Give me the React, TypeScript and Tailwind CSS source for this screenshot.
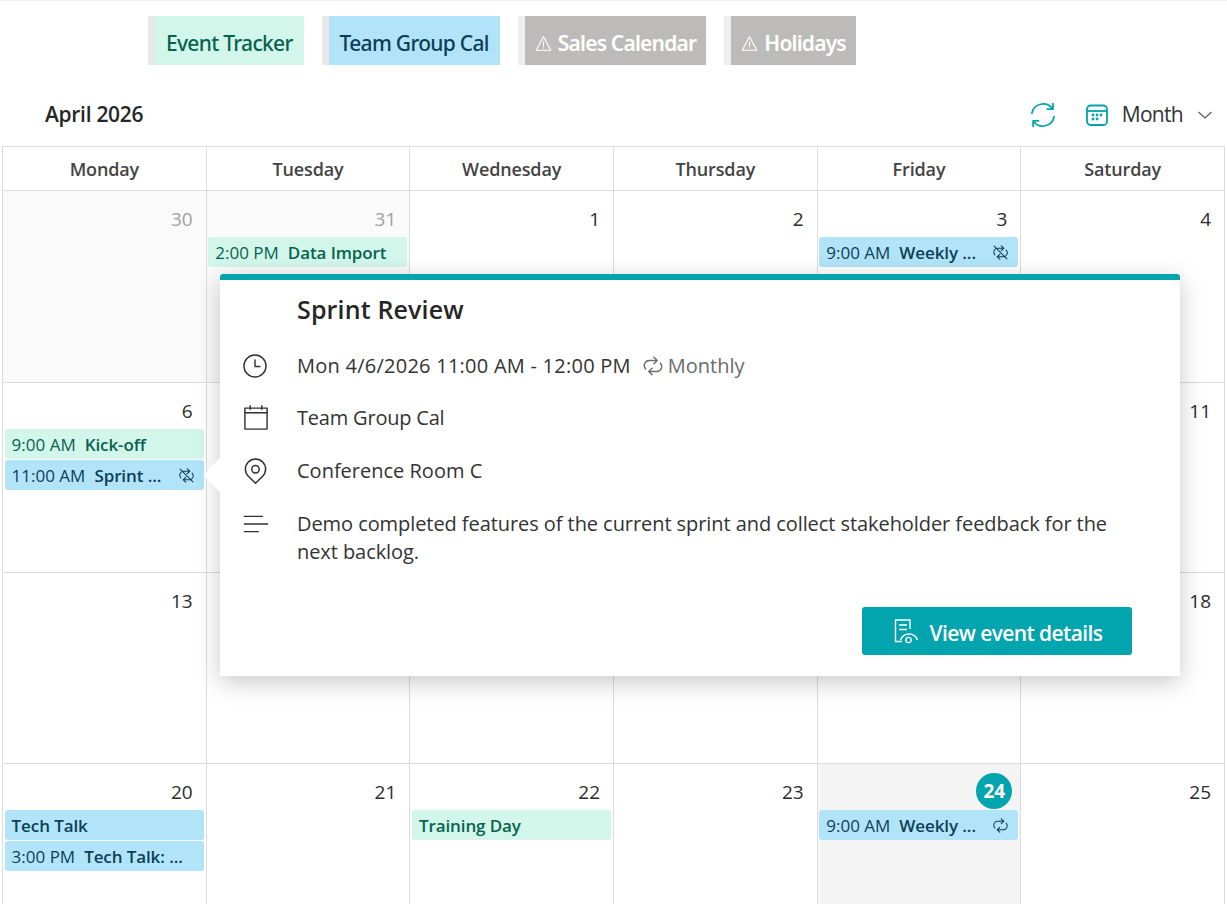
import type { ReactNode } from 'react'

type CalEvent = {
  time?: string
  title: string
  kind: 'green' | 'blue'
  icon?: 'off' | 'repeat'
}

type Day = {
  date: number
  muted?: boolean
  today?: boolean
  events?: CalEvent[]
}

const WEEKDAYS = ['Monday', 'Tuesday', 'Wednesday', 'Thursday', 'Friday', 'Saturday']

const WEEKS: { height: string; days: Day[] }[] = [
  {
    height: 'h-[192px]',
    days: [
      { date: 30, muted: true },
      { date: 31, muted: true, events: [{ time: '2:00 PM', title: 'Data Import', kind: 'green' }] },
      { date: 1 },
      { date: 2 },
      { date: 3, events: [{ time: '9:00 AM', title: 'Weekly ...', kind: 'blue', icon: 'off' }] },
      { date: 4 },
    ],
  },
  {
    height: 'h-[190px]',
    days: [
      {
        date: 6,
        events: [
          { time: '9:00 AM', title: 'Kick-off', kind: 'green' },
          { time: '11:00 AM', title: 'Sprint ...', kind: 'blue', icon: 'off' },
        ],
      },
      { date: 7 },
      { date: 8 },
      { date: 9 },
      { date: 10 },
      { date: 11 },
    ],
  },
  {
    height: 'h-[191px]',
    days: [{ date: 13 }, { date: 14 }, { date: 15 }, { date: 16 }, { date: 17 }, { date: 18 }],
  },
  {
    height: 'h-[160px]',
    days: [
      {
        date: 20,
        events: [
          { title: 'Tech Talk', kind: 'blue' },
          { time: '3:00 PM', title: 'Tech Talk: ...', kind: 'blue' },
        ],
      },
      { date: 21 },
      { date: 22, events: [{ title: 'Training Day', kind: 'green' }] },
      { date: 23 },
      {
        date: 24,
        today: true,
        events: [{ time: '9:00 AM', title: 'Weekly ...', kind: 'blue', icon: 'repeat' }],
      },
      { date: 25 },
    ],
  },
]

function Icon({ className, size = 24, children }: { className?: string; size?: number; children: ReactNode }) {
  return (
    <svg
      width={size}
      height={size}
      viewBox="0 0 24 24"
      fill="none"
      stroke="currentColor"
      strokeWidth="1.5"
      strokeLinecap="round"
      strokeLinejoin="round"
      className={className}
    >
      {children}
    </svg>
  )
}

function RepeatIcon({ off, size = 16, className }: { off?: boolean; size?: number; className?: string }) {
  return (
    <Icon size={size} className={className}>
      <path d="M13 2.5 16.5 6 13 9.5" />
      <path d="M16.5 6H8a5.5 5.5 0 0 0-4 9.3" />
      <path d="M11 21.5 7.5 18l3.5-3.5" />
      <path d="M7.5 18H16a5.5 5.5 0 0 0 4-9.3" />
      {off && <path d="M3 3l18 18" />}
    </Icon>
  )
}

function WarnIcon() {
  return (
    <svg width="17" height="17" viewBox="0 0 17 17" fill="none" stroke="currentColor" strokeWidth="1.1" className="shrink-0">
      <path d="M8.5 1.8 1.2 15.2h14.6z" strokeLinejoin="round" />
      <path d="M8.5 6.5v5M8.5 12.6v1" />
    </svg>
  )
}

function EventChip({ event }: { event: CalEvent }) {
  const tone = event.kind === 'green' ? 'bg-[#d3f6ea] text-[#07634f]' : 'bg-[#b2e4f9] text-[#0c3f57]'
  return (
    <div className={`flex h-[30px] items-center rounded-[3px] pl-[7px] pr-[9px] text-[17px] leading-none ${tone}`}>
      {event.time && <span className="mr-[9px] whitespace-nowrap">{event.time}</span>}
      <span className="whitespace-nowrap font-semibold tracking-[-0.1px]">{event.title}</span>
      {event.icon && <RepeatIcon off={event.icon === 'off'} size={17} className="ml-auto" />}
    </div>
  )
}

function DayCell({ day }: { day: Day }) {
  const bg = day.today ? 'bg-[#f4f4f4]' : day.muted ? 'bg-[#fafafa]' : 'bg-white'
  return (
    <div className={`min-w-0 border-l border-[#dcdcdc] ${bg}`}>
      <div className="flex h-[46px] items-start justify-end pr-[13px]">
        {day.today ? (
          <span className="mr-[-5px] mt-[9px] flex h-[36px] w-[36px] items-center justify-center rounded-full bg-[#02a4ae] text-[19px] font-bold text-white">
            {day.date}
          </span>
        ) : (
          <span className={`mt-[14px] text-[19px] leading-[28px] ${day.muted ? 'text-[#a0a0a0]' : 'text-[#2b2b2b]'}`}>
            {day.date}
          </span>
        )}
      </div>
      <div className="flex flex-col gap-[1px] pl-[1.6px] pr-[2px]">
        {day.events?.map((event) => (
          <EventChip key={event.title} event={event} />
        ))}
      </div>
    </div>
  )
}

function Tab({ label, tone, warn }: { label: string; tone: string; warn?: boolean }) {
  return (
    <div className={`flex h-[49px] items-center border-l-[7px] pt-[6px] text-[21px] ${warn ? 'px-[10px]' : 'px-[11px]'} ${tone}`}>
      {warn && <WarnIcon />}
      <span
        className={
          warn
            ? "ml-[6px] font-['Noto_Sans'] font-semibold tracking-[-0.8px]"
            : "font-['Noto_Sans'] font-medium tracking-[-0.7px]"
        }
      >
        {label}
      </span>
    </div>
  )
}

function PopupRow({ icon, className, children }: { icon: ReactNode; className?: string; children: ReactNode }) {
  return (
    <div className={`flex items-start ${className ?? ''}`}>
      <div className="flex h-[28px] w-[77px] shrink-0 items-center pl-[22px] text-[#2f2f2f]">{icon}</div>
      <div className="text-[20px] leading-[28px] text-[#333333]">{children}</div>
    </div>
  )
}

function EventPopup() {
  return (
    <div className="absolute left-[220px] top-[273px] h-[402px] w-[960px] rounded-t-[3px] border-t-[6px] border-[#02a4ae] bg-white shadow-[0_6px_24px_rgba(0,0,0,0.22)]">
      <div className="absolute left-[-12px] top-[183px] h-[24px] w-[24px] rotate-45 bg-white" />
      <div className="relative flex h-full flex-col">
        <h2 className="mt-[11px] pl-[77px] text-[25px] font-semibold leading-[36px] tracking-[0.15px] text-[#262626]">
          Sprint Review
        </h2>
        <div className="mt-[25px] flex flex-col">
          <PopupRow
            className="mb-[24px]"
            icon={
              <Icon size={26}>
                <circle cx="12" cy="12" r="10.2" strokeWidth="1.3" />
                <path d="M12 6.5V12.5H16.5" strokeWidth="1.3" />
              </Icon>
            }
          >
            <div className="flex h-[28px] items-center">
              <span className="tracking-[0.25px]">Mon 4/6/2026 11:00 AM - 12:00 PM</span>
              <RepeatIcon size={22} className="ml-[11px] mr-[4px] text-[#6b6b6b]" />
              <span className="text-[#6b6b6b]">Monthly</span>
            </div>
          </PopupRow>
          <PopupRow
            className="mb-[25px]"
            icon={
              <Icon size={28}>
                <rect x="2.5" y="3.5" width="19" height="18" strokeWidth="1.2" strokeLinecap="square" />
                <path d="M2.5 7.5h19M7 1.5v3M17 1.5v3" strokeWidth="1.2" />
              </Icon>
            }
          >
            <span className="tracking-[-0.2px]">Team Group Cal</span>
          </PopupRow>
          <PopupRow
            className="mb-[25px]"
            icon={
              <Icon size={27}>
                <path d="M12 22.5 5.6 16.2a9 9 0 1 1 12.8 0z" strokeWidth="1.3" />
                <circle cx="12" cy="10" r="3.3" strokeWidth="1.3" />
              </Icon>
            }
          >
            Conference Room C
          </PopupRow>
          <PopupRow
            icon={
              <Icon size={28}>
                <path d="M2 5.5h15.5M2 12h20M2 18.5h12" strokeWidth="1.2" />
              </Icon>
            }
          >
            <span className="block w-[830px] tracking-[-0.07px]">
              Demo completed features of the current sprint and collect stakeholder feedback for the next backlog.
            </span>
          </PopupRow>
        </div>
        <div className="mt-auto mb-[21px] flex justify-end pr-[48px]">
          <button className="flex h-[48px] w-[270px] items-center justify-center gap-[11px] rounded-[3px] bg-[#02a4ae] text-[21px] font-semibold tracking-[-0.6px] text-white">
            <svg width="27" height="27" viewBox="0 0 27 27" fill="none" stroke="currentColor" strokeWidth="1.4">
              <path d="M10 23.5H3.5V2h14.5v9" />
              <path d="M7 7h8M7 11.5h8" />
              <path d="M8.5 22a9 9 0 0 1 17 0" />
              <circle cx="16.5" cy="22" r="2.6" />
            </svg>
            <span className="pt-[5px]">View event details</span>
          </button>
        </div>
      </div>
    </div>
  )
}

export default function App() {
  return (
    <div className="relative h-[904px] w-[1227px] overflow-hidden border-t border-[#f0f0f0] bg-white font-['Open_Sans','Noto_Sans',sans-serif]">
      {/* calendar tabs */}
      <div className="flex gap-[18px] pl-[148px] pt-[15px]">
        <Tab label="Event Tracker" tone="border-[#e8e8e8] bg-[#d3f6ea] text-[#07634f]" />
        <Tab label="Team Group Cal" tone="border-[#e8e8e8] bg-[#b2e4f9] text-[#0c3f57]" />
        <Tab label="Sales Calendar" tone="border-[#eeeeee] bg-[#bdbbb9] text-white" warn />
        <Tab label="Holidays" tone="border-[#eeeeee] bg-[#bdbbb9] text-white" warn />
      </div>

      {/* toolbar */}
      <div className="flex h-[81px] items-center pl-[45px] pr-[14px] pt-[19px]">
        <div className="text-[21px] font-semibold tracking-[-0.3px] text-[#262626]">April 2026</div>
        <div className="ml-auto flex items-center text-[#02a4ae]">
          <Icon size={28}>
            <path d="M2.5 10.5A9.8 9.8 0 0 1 20 6.5" />
            <path d="M20.5 2.2v4.8h-4.8" />
            <path d="M21.5 13.5A9.8 9.8 0 0 1 4 17.5" />
            <path d="M3.5 21.8V17h4.8" />
          </Icon>
          <svg width="24" height="24" viewBox="0 0 24 24" fill="none" stroke="currentColor" strokeWidth="1.8" className="ml-[28px]">
            <rect x="2" y="2.5" width="20" height="19.5" rx="3.5" />
            <path d="M2 8h20" />
            <path d="M8 12h.01M12 12h.01M16 12h.01M8 16h.01M12 16h.01" strokeWidth="2.8" strokeLinecap="round" />
          </svg>
          <span className="ml-[13px] text-[21px] tracking-[-0.7px] text-[#333333]">Month</span>
          <svg width="16" height="16" viewBox="0 0 16 16" fill="none" stroke="#555555" strokeWidth="1.1" className="ml-[14px]">
            <path d="M1.5 5 8 11l6.5-6" />
          </svg>
        </div>
      </div>

      {/* month grid */}
      <div className="ml-[2px] w-[1223px] border-r border-[#dcdcdc]">
        <div className="grid h-[45px] grid-cols-6 border-y border-[#dcdcdc]">
          {WEEKDAYS.map((name) => (
            <div
              key={name}
              className="flex items-center justify-center border-l border-[#dcdcdc] pt-[1px] text-[18px] font-semibold tracking-[-0.15px] text-[#444444]"
            >
              {name}
            </div>
          ))}
        </div>
        {WEEKS.map((week) => (
          <div key={week.days[0].date} className={`grid grid-cols-6 border-b border-[#dcdcdc] ${week.height}`}>
            {week.days.map((day) => (
              <DayCell key={day.date} day={day} />
            ))}
          </div>
        ))}
      </div>

      <EventPopup />
    </div>
  )
}
